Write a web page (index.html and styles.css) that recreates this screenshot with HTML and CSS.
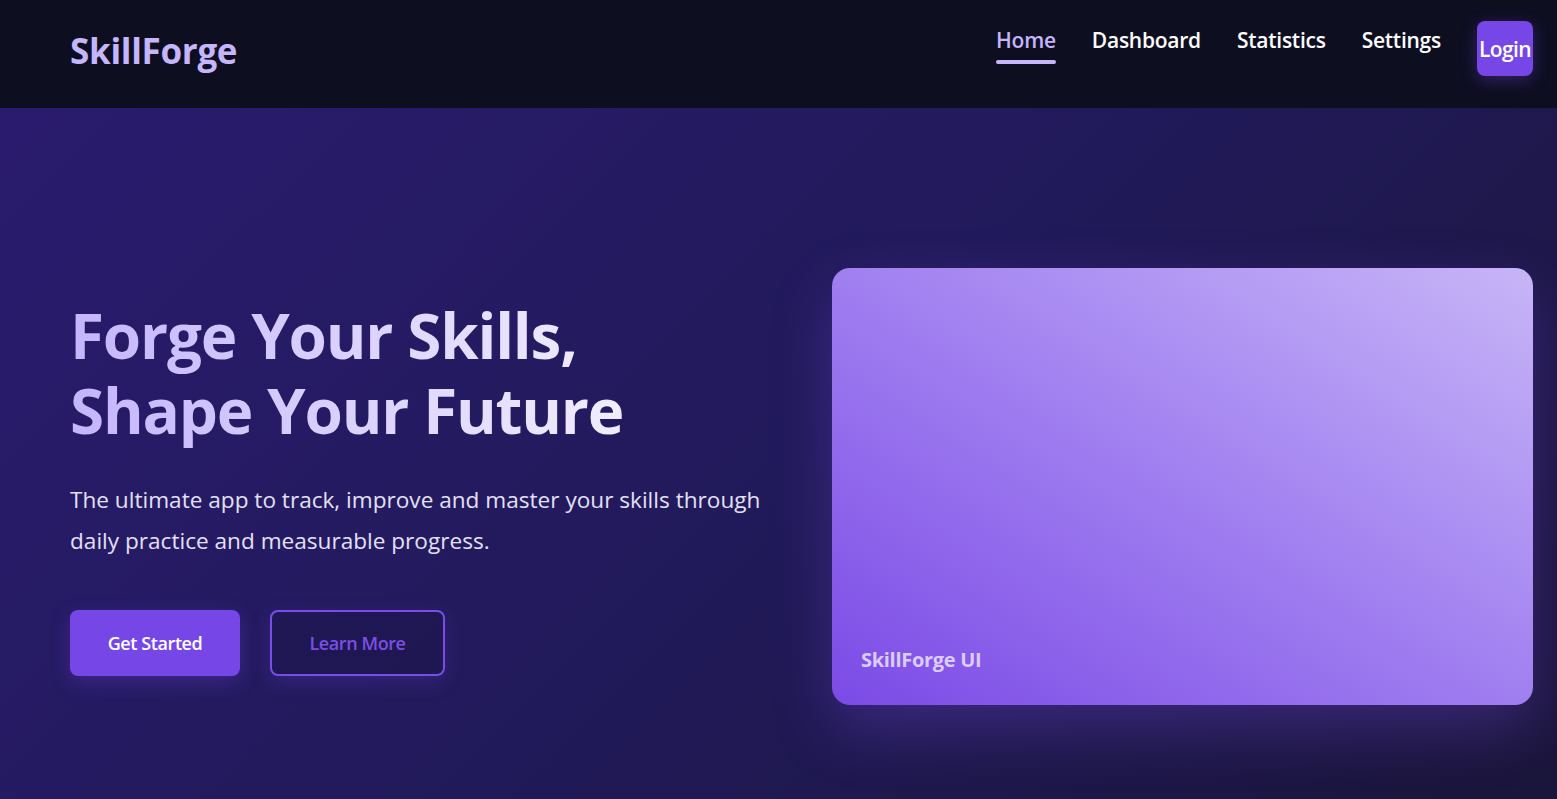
FILE: index.html
```html
<!DOCTYPE html>
<html lang="en">
<head>
<meta charset="utf-8">
<title>SkillForge</title>
<link rel="stylesheet" href="styles.css">
</head>
<body>
<header class="topbar">
  <div class="logo">SkillForge</div>
  <nav class="nav">
    <a class="nav-link active" href="#">Home</a>
    <a class="nav-link" href="#">Dashboard</a>
    <a class="nav-link" href="#">Statistics</a>
    <a class="nav-link" href="#">Settings</a>
    <button class="login">Login</button>
  </nav>
</header>
<section class="hero">
  <div class="hero-text">
    <h1 class="title">Forge Your Skills,<br>Shape Your Future</h1>
    <p class="lead">The ultimate app to track, improve and master your skills through daily practice and measurable progress.</p>
    <div class="actions">
      <a class="btn btn-primary" href="#">Get Started</a>
      <a class="btn btn-outline" href="#">Learn More</a>
    </div>
  </div>
  <div class="showcase">
    <span class="showcase-label">SkillForge UI</span>
  </div>
</section>
</body>
</html>
```

FILE: styles.css
```css
* { box-sizing: border-box; }
html, body { margin: 0; padding: 0; }
body {
  font-family: "Open Sans", "Noto Sans", sans-serif;
  background: #1a1538;
  color: #ffffff;
}
.topbar {
  height: 108px;
  background: #0e0e21;
  display: flex;
  align-items: flex-start;
  justify-content: space-between;
  padding: 0 24px 0 70px;
}
.logo {
  font-size: 35px;
  font-weight: 700;
  color: #c4b5fd;
  letter-spacing: -0.3px;
  line-height: 1;
  margin-top: 33px;
}
.nav {
  display: flex;
  align-items: flex-start;
  gap: 36px;
  margin-top: 21px;
}
.nav-link {
  font-size: 21px;
  font-weight: 600;
  color: #ffffff;
  text-decoration: none;
  letter-spacing: -0.25px;
  line-height: 1;
  padding-top: 9px;
  padding-bottom: 13px;
  position: relative;
}
.nav-link.active {
  color: #c4b5fd;
}
.nav-link.active::after {
  content: "";
  position: absolute;
  left: 0;
  right: 0;
  bottom: 0;
  height: 4px;
  border-radius: 2px;
  background: #c4b5fd;
}
.login {
  font-family: inherit;
  font-size: 21px;
  font-weight: 600;
  letter-spacing: -0.6px;
  color: #ffffff;
  background: #7647e6;
  border: none;
  border-radius: 8px;
  width: 56px;
  height: 55px;
  padding: 0;
  display: flex;
  align-items: center;
  justify-content: center;
  box-shadow: 0 4px 16px rgba(118, 71, 230, 0.35);
}
.hero {
  background: linear-gradient(135deg, #2a1b6e 0%, #211a5a 50%, #1a1538 100%);
  padding: 160px 24px 160px 70px;
  display: grid;
  grid-template-columns: 1fr 701px;
  gap: 32px;
  align-items: center;
}
.title {
  margin: 0;
  font-size: 62px;
  font-weight: 700;
  line-height: 75px;
  letter-spacing: -1.2px;
  background: linear-gradient(90deg, #c4b5fd 0%, #f1edff 100%);
  -webkit-background-clip: text;
  background-clip: text;
  color: transparent;
  width: fit-content;
}
.lead {
  margin: 31px 0 0;
  font-size: 22.6px;
  line-height: 41px;
  color: #e4e0f5;
  letter-spacing: 0;
}
.actions {
  display: flex;
  gap: 30px;
  margin-top: 49px;
}
.btn {
  display: flex;
  align-items: center;
  justify-content: center;
  height: 66px;
  border-radius: 8px;
  font-size: 18px;
  font-weight: 600;
  letter-spacing: -0.4px;
  text-decoration: none;
}
.btn-primary {
  width: 170px;
  background: #7647e6;
  color: #ffffff;
  box-shadow: 0 6px 20px rgba(118, 71, 230, 0.3);
}
.btn-outline {
  width: 175px;
  border: 2px solid #7a4de6;
  color: #7a4fe3;
  background: rgba(20, 14, 50, 0.25);
  box-shadow: 0 6px 20px rgba(118, 71, 230, 0.22);
}
.showcase {
  height: 437px;
  border-radius: 18px;
  background: linear-gradient(to top right, #7b4ae6 0%, #a07ff0 50%, #c7b5f7 100%);
  box-shadow: 0 24px 60px rgba(124, 77, 230, 0.3);
  display: flex;
  align-items: flex-end;
  padding: 0 29px 32px;
}
.showcase-label {
  font-size: 20px;
  font-weight: 700;
  letter-spacing: -0.3px;
  color: rgba(235, 226, 255, 0.85);
}
```
